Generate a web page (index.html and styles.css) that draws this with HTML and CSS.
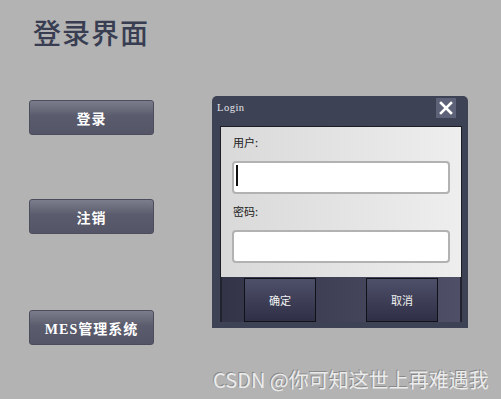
FILE: index.html
```html
<html>
  <head>
    <meta charset="utf-8" />
    <link rel="stylesheet" href="styles.css">
  </head>
  <body>
    <main class="page">
      <h1 class="title">登录界面</h1>
      <div class="content">
        <div class="menu">
          <button class="menu-btn">登录</button>
          <button class="menu-btn">注销</button>
          <button class="menu-btn">MES管理系统</button>
        </div>
        <section class="dialog">
          <div class="dialog-bar">
            <span class="dialog-title">Login</span>
            <span class="dialog-close">
              <svg width="14" height="14" viewBox="0 0 14 14">
                <path d="M2 2 L12 12 M12 2 L2 12" stroke="#ffffff" stroke-width="2.6" stroke-linecap="square" />
              </svg>
            </span>
          </div>
          <div class="dialog-body">
            <label class="field-label">用户:</label>
            <div class="field"><span class="caret"></span></div>
            <label class="field-label">密码:</label>
            <div class="field"></div>
          </div>
          <div class="dialog-actions">
            <button class="action-btn">确定</button>
            <button class="action-btn">取消</button>
          </div>
        </section>
      </div>
      <div class="watermark">CSDN @你可知这世上再难遇我</div>
    </main>
  </body>
</html>
```

FILE: styles.css
```css
:root {
  --color-bg: #b3b3b3;
  --color-title: #383d52;
  --color-frame: #3e4255;
}

* {
  box-sizing: border-box;
}

body {
  margin: 0;
  background-color: var(--color-bg);
  font-family: 'Liberation Serif', 'Noto Sans CJK SC', serif;
  overflow: hidden;
}

.page {
  position: relative;
  width: 501px;
  height: 399px;
  padding: 17px 0 0 29px;
}

.title {
  margin: 0 0 0 4px;
  font-family: 'Noto Sans CJK SC', sans-serif;
  font-weight: 500;
  font-size: 28px;
  line-height: 30px;
  letter-spacing: 1px;
  color: var(--color-title);
}

.content {
  display: flex;
  margin-top: 49px;
}

.menu {
  display: flex;
  flex-direction: column;
  width: 183px;
  padding-top: 4px;
}

.menu-btn {
  width: 125px;
  height: 35px;
  border: 1px solid #4b4c5c;
  border-radius: 3px;
  background: linear-gradient(#7c7d8c, #5a5b6c 45%, #545566);
  color: #ffffff;
  font-family: 'Liberation Serif', 'Noto Sans CJK SC', serif;
  font-weight: 700;
  font-size: 14px;
  letter-spacing: 1px;
  padding: 0;
}

.menu-btn + .menu-btn {
  margin-top: 64px;
}

.menu-btn:last-child {
  margin-top: 76px;
}

.dialog {
  width: 256px;
  height: 232px;
  background-color: var(--color-frame);
  border-radius: 5px 5px 0 0;
  padding: 0 6px 6px 8px;
  display: flex;
  flex-direction: column;
}

.dialog-bar {
  height: 30px;
  display: flex;
  align-items: flex-start;
  justify-content: space-between;
  padding: 2px 6px 0 0;
}

.dialog-title {
  color: #e4e4e8;
  font-size: 10.5px;
  line-height: 20px;
  margin-left: -3px;
  letter-spacing: 0.5px;
}

.dialog-close {
  width: 20px;
  height: 20px;
  background-color: #5e6278;
  display: flex;
  align-items: center;
  justify-content: center;
}

.dialog-body {
  height: 151px;
  background: linear-gradient(to right, #d9d9d9, #eeeeee);
  border: 1px solid #1c1d26;
  border-bottom: none;
  padding: 7px 11px 0 11px;
  display: flex;
  flex-direction: column;
}

.field-label {
  font-family: 'Noto Sans CJK SC', sans-serif;
  font-size: 11px;
  line-height: 16px;
  color: #222222;
  margin-left: 1px;
}

.field {
  position: relative;
  height: 33px;
  margin-top: 11px;
  margin-bottom: 9px;
  background-color: #ffffff;
  border: 2px solid #b2b2b2;
  border-radius: 4px;
}

.caret {
  position: absolute;
  left: 2px;
  top: 2px;
  width: 2px;
  height: 21px;
  background-color: #111111;
}

.dialog-actions {
  flex: 1;
  display: flex;
  justify-content: space-between;
  padding: 1px 22px 0 22px;
  background: linear-gradient(to right, #333448, #4f5067);
  border-left: 2px solid #22232e;
  border-right: 2px solid #22232e;
}

.action-btn {
  width: 72px;
  height: 44px;
  border: 1px solid #111218;
  background: linear-gradient(#4e4f69, #2f3046);
  color: #f2f2f2;
  font-family: 'Noto Sans CJK SC', sans-serif;
  font-size: 11px;
  padding: 0;
}

.watermark {
  position: absolute;
  left: 213px;
  top: 365px;
  font-family: 'Noto Sans CJK SC', sans-serif;
  font-size: 20px;
  color: #ececec;
  text-shadow: -1px -1px 0 #8a8a8a;
  white-space: nowrap;
}
```
